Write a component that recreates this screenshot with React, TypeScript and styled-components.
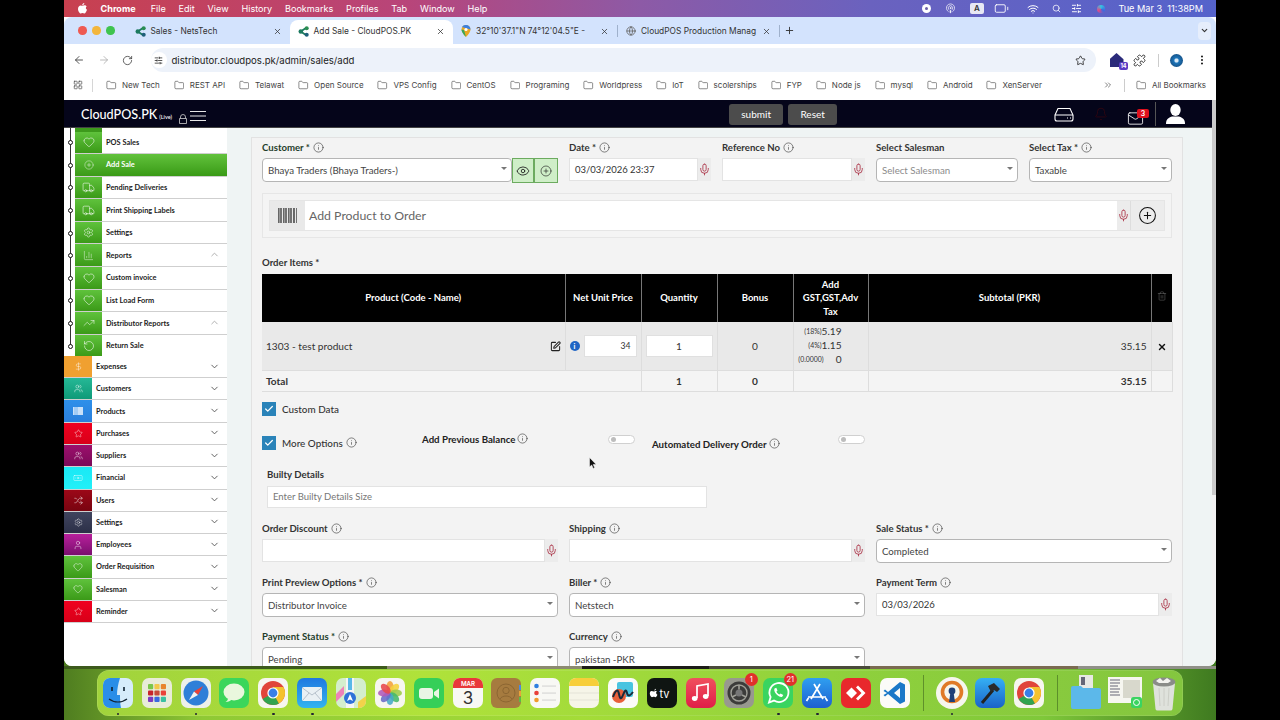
import React from 'react'
import styled, { createGlobalStyle } from 'styled-components'
import {
  Banknote, BarChart3, Battery, ChevronDown, ChevronUp, CirclePlus, DollarSign, Eye, Heart, Info, Mail, Mic,
  Podcast, Puzzle, RotateCcw, RotateCw, ArrowLeft, ArrowRight, Search, Settings, Shuffle, SlidersHorizontal, SquarePen,
  Star, Trash2, TrendingUp, Truck, User, Users, Wifi, X, Plus, Folder, LayoutGrid, Bell, Check, Globe, EllipsisVertical, ChevronsRight,
} from 'lucide-react'

const GlobalStyle = createGlobalStyle`
  html, body { margin: 0; padding: 0; background: #000; height: 100%; overflow: hidden; }
  * { box-sizing: border-box; }
  body { font-family: Lato, "Open Sans", sans-serif; }
`

const Screen = styled.div`
  width: 1152px;
  height: 720px;
  margin: 0 auto;
  display: flex;
  flex-direction: column;
  overflow: hidden;
  background: linear-gradient(90deg, #4f7d20 0%, #8fc935 12%, #a4dc38 45%, #7fc83a 85%, #3f7a20 100%);
`

/* mac menu bar */
const MenuBar = styled.div`
  height: 17px;
  flex: none;
  display: flex;
  align-items: center;
  padding: 0 13px 0 14px;
  color: #fff;
  font-family: Inter, sans-serif;
  font-size: 9.1px;
  background: linear-gradient(90deg, #c8404f 0%, #b8457a 30%, #8d5aa6 50%, #6a62bf 70%, #5563cb 100%);
`
const AppleMark = styled.svg`
  margin-right: 13.5px;
  flex: none;
`
const MenuItem = styled.span<{ $bold?: boolean }>`
  margin-right: ${(p) => (p.$bold ? 15 : 12.8)}px;
  font-weight: ${(p) => (p.$bold ? 700 : 400)};
`
const StatusArea = styled.div`
  margin-left: auto;
  display: flex;
  align-items: center;
  font-size: 9.2px;
`
const StatusSlot = styled.span<{ $ml?: number }>`
  display: flex;
  align-items: center;
  margin-left: ${(p) => p.$ml ?? 0}px;
`
const KeyBox = styled.span`
  width: 14px;
  height: 11px;
  background: #e8e8f4;
  color: #333;
  border-radius: 2px;
  font-size: 8px;
  font-weight: 600;
  text-align: center;
  line-height: 11px;
`
const RecDot = styled.span`
  width: 9px;
  height: 9px;
  border-radius: 50%;
  background: #fff;
  display: flex;
  align-items: center;
  justify-content: center;
  &::after {
    content: '';
    width: 3px;
    height: 3px;
    border-radius: 50%;
    background: #6a5ea8;
  }
`
const SiriDot = styled.span`
  width: 8px;
  height: 8px;
  border-radius: 50%;
  background: conic-gradient(#37c4e0, #3a6ae0, #e04a8a, #37c4e0);
`

/* browser */
const BrowserWindow = styled.div`
  height: 649px;
  flex: none;
  display: flex;
  flex-direction: column;
  background: #fff;
  border-radius: 0 0 8px 8px;
  overflow: hidden;
`
const TabStrip = styled.div`
  height: 27px;
  flex: none;
  background: #d3e3fd;
  border-radius: 8px 8px 0 0;
  display: flex;
  align-items: flex-end;
  padding-left: 14px;
  font-family: Inter, sans-serif;
  font-size: 8.4px;
  color: #333;
`
const TrafficLights = styled.div`
  display: flex;
  gap: 5.5px;
  align-self: center;
  margin-right: 12px;
`
const Light = styled.span<{ $c: string }>`
  width: 8.5px;
  height: 8.5px;
  border-radius: 50%;
  background: ${(p) => p.$c};
`
const Tab = styled.div<{ $w: number; $active?: boolean }>`
  width: ${(p) => p.$w}px;
  height: 24px;
  flex: none;
  display: flex;
  align-items: center;
  gap: 5px;
  padding: 0 8px 2px 8px;
  border-radius: 8px 8px 0 0;
  background: ${(p) => (p.$active ? '#fff' : 'transparent')};
`
const TabTitle = styled.span`
  flex: 1;
  white-space: nowrap;
`
const TabSep = styled.span`
  width: 1px;
  height: 12px;
  background: #9fb1cc;
  align-self: center;
  flex: none;
`
const NewTab = styled.span`
  align-self: center;
  margin-left: 4px;
  display: flex;
`
const ChevronBox = styled.span`
  align-self: center;
  margin-left: auto;
  margin-right: 5px;
  width: 13px;
  height: 18px;
  background: #e6eefc;
  border-radius: 4px;
  display: flex;
  align-items: center;
  justify-content: center;
`
const Toolbar = styled.div`
  height: 32px;
  flex: none;
  background: #fff;
  display: flex;
  align-items: center;
  padding: 0 0 0 9px;
  gap: 12.5px;
  color: #444;
`
const AddressPill = styled.div`
  width: 945px;
  height: 24px;
  flex: none;
  margin-left: 5px;
  background: #edf2fa;
  border-radius: 12px;
  display: flex;
  align-items: center;
  padding: 0 9.5px 0 0;
  font-family: Inter, sans-serif;
  font-size: 9.6px;
  color: #222;
  gap: 5px;
`
const SiteChip = styled.span`
  width: 16px;
  height: 16px;
  border-radius: 50%;
  background: #fff;
  display: flex;
  align-items: center;
  justify-content: center;
`
const PillStar = styled.span`
  margin-left: auto;
  display: flex;
`
const ToolGroup = styled.div`
  display: flex;
  align-items: center;
  margin-left: 1.5px;
`
const ToolSlot = styled.span<{ $ml?: number }>`
  display: flex;
  margin-left: ${(p) => p.$ml ?? 0}px;
`
const ExtBadge = styled.span`
  width: 14px;
  height: 14px;
  display: block;
  background: #2a2a7a;
  clip-path: polygon(50% 0, 100% 45%, 100% 100%, 0 100%, 0 45%);
`
const ExtWrap = styled.span`
  position: relative;
  display: block;
`
const ExtCount = styled.span`
  position: absolute;
  right: -4px;
  bottom: -3px;
  background: #5b3cc4;
  color: #fff;
  font-size: 5.5px;
  font-family: Inter, sans-serif;
  font-weight: 700;
  padding: 1px;
  border-radius: 2px;
`
const ToolSep = styled.span`
  display: block;
  width: 1px;
  height: 13px;
  background: #ccc;
`
const Avatar = styled.span`
  display: block;
  width: 13px;
  height: 13px;
  border-radius: 50%;
  background: radial-gradient(circle, #dbe9f5 15%, #1d74b8 30%, #123e6a 100%);
`
const BookmarkBar = styled.div`
  height: 24px;
  flex: none;
  background: #fff;
  display: flex;
  align-items: center;
  padding: 0 10px 6px 9px;
  font-family: Inter, sans-serif;
  font-size: 8px;
  color: #444;
`
const AppsSep = styled.span`
  width: 1px;
  height: 13px;
  background: #d6d6d6;
  margin: 0 13px 0 9px;
`
const Bookmark = styled.span<{ $last?: boolean }>`
  display: flex;
  align-items: center;
  gap: 5.5px;
  margin-right: ${(p) => (p.$last ? 0 : 13.9)}px;
  white-space: nowrap;
`
const MoreMarks = styled.span`
  margin-left: auto;
  display: flex;
  align-items: center;
  gap: 11px;
`

/* app shell */
const AppArea = styled.div`
  flex: 1;
  min-height: 0;
  display: flex;
`
const AppColumn = styled.div`
  flex: 1;
  min-width: 0;
  display: flex;
  flex-direction: column;
`
const ScrollTrack = styled.div`
  width: 4px;
  flex: none;
  background: #f2f2f2;
`
const ScrollThumb = styled.div`
  height: 395px;
  background: #cbcbcb;
`
const AppHeader = styled.header`
  height: 28px;
  flex: none;
  background: #05051a;
  border-bottom: 1px solid #444;
  display: flex;
  align-items: center;
  padding: 1px 22px 0 17px;
  color: #fff;
`
const Brand = styled.span`
  font-size: 12.6px;
  font-weight: 500;
`
const BrandTag = styled.small`
  font-size: 5.6px;
  margin-left: 2px;
`
const LockMark = styled.svg`
  margin: 9px 0 0 6px;
`
const BurgerMark = styled.svg`
  margin: 3px 0 0 2px;
`
const HeadButton = styled.button<{ $w: number }>`
  width: ${(p) => p.$w}px;
  height: 21px;
  border: 0;
  border-radius: 3px;
  background: #4c4c4c;
  color: #fff;
  font-family: Lato, sans-serif;
  font-size: 10px;
  margin-right: 5px;
  padding: 0;
`
const HeadButtons = styled.div`
  display: flex;
  margin-left: 523px;
`
const HeadIcons = styled.div`
  margin-left: auto;
  display: flex;
  align-items: center;
`
const IconSlot = styled.span<{ $w: number; $top?: number }>`
  width: ${(p) => p.$w}px;
  display: flex;
  justify-content: center;
  position: relative;
  padding-top: ${(p) => p.$top ?? 0}px;
`
const MailBadge = styled.span`
  position: absolute;
  top: 7px;
  right: 3px;
  background: #e0101c;
  border-radius: 2px;
  font-size: 7.5px;
  line-height: 9px;
  font-weight: 700;
  padding: 0 4px;
  color: #fff;
`
const HeadSep = styled.span`
  width: 1px;
  height: 24px;
  background: #555;
  margin: 0 4px 0 3px;
`
const Body = styled.div`
  flex: 1;
  min-height: 0;
  display: flex;
  overflow: hidden;
`

/* sidebar */
const Sidebar = styled.nav`
  width: 163px;
  flex: none;
  background: #fff;
  overflow: hidden;
`
const SubList = styled.div`
  position: relative;
  padding-left: 11px;
  margin-bottom: -1.5px;
  &::before {
    content: '';
    position: absolute;
    left: 6px;
    top: 0;
    bottom: 10px;
    width: 1px;
    background: #333;
  }
`
const SubPeek = styled.div`
  height: 3.5px;
  width: 27px;
  background: #3d9a1c;
`
const SideRow = styled.div<{ $h: number; $active?: boolean }>`
  position: relative;
  height: ${(p) => p.$h}px;
  display: flex;
  align-items: center;
  border-bottom: 1px solid #cfcfcf;
  color: ${(p) => (p.$active ? '#fff' : '#1c1c1c')};
  font-size: 7.4px;
  font-weight: 700;
  background: ${(p) => (p.$active ? 'linear-gradient(#62c23c, #399a16)' : '#fff')};
  svg.chev {
    position: absolute;
    right: 7px;
    top: 50%;
    margin-top: -6px;
  }
`
const TimelineDot = styled.span`
  position: absolute;
  left: -7px;
  top: 50%;
  margin-top: -2px;
  width: 5px;
  height: 5px;
  border-radius: 50%;
  background: #fff;
  border: 1px solid #111;
`
const SideIcon = styled.span<{ $bg: string; $w: number }>`
  width: ${(p) => p.$w}px;
  height: 100%;
  flex: none;
  display: flex;
  align-items: center;
  justify-content: center;
  margin-right: 4px;
  color: rgba(255, 255, 255, 0.85);
  background: ${(p) => p.$bg};
`

/* form */
const Main = styled.main`
  flex: 1;
  min-width: 0;
  background: #eff4f4;
  padding: 9px 29px 0 24px;
  position: relative;
  overflow: hidden;
`
const Card = styled.section`
  background: #f3f3f3;
  border: 1px solid #e2e2e2;
  border-bottom: 0;
  padding: 3px 10px 0 10px;
  height: 600px;
`
const TopGrid = styled.div`
  display: grid;
  grid-template-columns: 296px 142px 143px 142px 143px;
  column-gap: 11px;
`
const ThirdGrid = styled.div`
  display: grid;
  grid-template-columns: repeat(3, 296px);
  column-gap: 11px;
  row-gap: 13px;
  margin-top: 14px;
`
const Label = styled.label<{ $tone?: string }>`
  height: 13px;
  margin-bottom: 4px;
  display: flex;
  align-items: center;
  gap: 3px;
  font-size: 9.6px;
  font-weight: 700;
  color: ${(p) => p.$tone ?? '#333'};
  white-space: nowrap;
`
const InputRow = styled.div`
  display: flex;
  height: 23px;
  margin-top: 0.5px;
`
const TextBox = styled.div`
  flex: 1;
  min-width: 0;
  background: #fff;
  border: 1px solid #e3e3e3;
  padding: 0 5px;
  font-size: 9.5px;
  line-height: 21px;
  color: #333;
`
const MicAddon = styled.span`
  width: 13px;
  flex: none;
  background: #ececec;
  color: #a8293e;
  display: flex;
  align-items: center;
  justify-content: center;
`
const SelectBox = styled.div<{ $muted?: boolean }>`
  position: relative;
  flex: 1;
  height: 24px;
  background: #fff;
  border: 1px solid #b5b5b5;
  border-radius: 4px;
  padding: 0 5px;
  font-size: 9.7px;
  line-height: 23px;
  color: ${(p) => (p.$muted ? '#8b8b8b' : '#444')};
  &::after {
    content: '';
    position: absolute;
    right: 4px;
    top: 8px;
    border: 3px solid transparent;
    border-top: 3px solid #777;
  }
`
const GreenAddon = styled.span<{ $w: number }>`
  width: ${(p) => p.$w}px;
  height: 25px;
  flex: none;
  background: #cfeec8;
  border: 1px solid #6cab5f;
  display: flex;
  align-items: center;
  justify-content: center;
  color: #222;
`
const ControlLine = styled.div`
  display: flex;
`
const ProductBox = styled.div`
  margin-top: 10px;
  height: 45px;
  border: 1px solid #e6e6e6;
  padding: 6px;
  background: #f4f4f4;
`
const ProductRow = styled.div`
  display: flex;
  height: 31px;
  background: #fff;
  border: 1px solid #e5e5e5;
`
const BarcodeAddon = styled.span`
  width: 35px;
  background: #e9e9e9;
  display: flex;
  align-items: center;
  justify-content: center;
`
const ProductText = styled.span`
  flex: 1;
  padding-left: 4px;
  font-size: 12.3px;
  line-height: 29px;
  color: #666;
`
const RoundAddon = styled.span`
  width: 34px;
  background: #ececec;
  border-left: 1px solid #ddd;
  display: flex;
  align-items: center;
  justify-content: center;
  color: #111;
`
const ItemsLabel = styled(Label)`
  margin: 18px 0 5px;
`
const OrderTable = styled.table`
  width: 910px;
  table-layout: fixed;
  border-collapse: collapse;
  font-size: 10.1px;
  color: #333;
`
const HeadCell = styled.th<{ $w: number }>`
  width: ${(p) => p.$w}px;
  height: 48px;
  padding: 0;
  background: #000;
  color: #fff;
  font-size: 9.5px;
  font-weight: 700;
  line-height: 13.6px;
  border-right: 1px solid #777;
  &:last-child { border-right: 0; }
`
const Cell = styled.td<{ $align?: string; $bold?: boolean }>`
  height: 48.5px;
  padding: 0 4px;
  background: #e9e9e9;
  border-right: 1px solid #ddd;
  text-align: ${(p) => p.$align ?? 'center'};
  font-weight: ${(p) => (p.$bold ? 700 : 400)};
`
const FlushCell = styled(Cell)`
  padding: 0;
`
const TotalCell = styled(Cell)`
  height: 21px;
  background: #f4f4f4;
  border-top: 1px solid #ddd;
  border-bottom: 1px solid #ddd;
`
const CellLine = styled.div`
  display: flex;
  align-items: center;
  justify-content: space-between;
`
const PriceBox = styled.span`
  flex: 1;
  height: 22px;
  margin-left: 4px;
  background: #fff;
  border: 1px solid #e0e0e0;
  font-size: 8.6px;
  line-height: 20px;
  text-align: right;
  padding-right: 5px;
`
const QtyBox = styled.div`
  height: 22px;
  background: #fff;
  border: 1px solid #e0e0e0;
  line-height: 20px;
  text-align: center;
`
const InfoDot = styled.span`
  width: 10px;
  height: 10px;
  flex: none;
  border-radius: 50%;
  background: #1f65c4;
  color: #fff;
  font-size: 7px;
  font-weight: 900;
  line-height: 10px;
  text-align: center;
`
const TaxLine = styled.div<{ $gap?: number }>`
  display: flex;
  justify-content: flex-end;
  align-items: center;
  gap: ${(p) => p.$gap ?? 0}px;
  padding-right: 26px;
  line-height: 13.8px;
`
const TaxPrefix = styled.small`
  font-size: 6.9px;
`
const CheckRow = styled.div`
  display: flex;
  align-items: center;
  gap: 6px;
  font-size: 9.9px;
  font-weight: 500;
  color: #333;
`
const CheckText = styled.span`
  display: flex;
  align-items: center;
  gap: 3px;
`
const CheckBox = styled.span`
  width: 14px;
  height: 14px;
  flex: none;
  background: #2a83b9;
  color: #fff;
  display: flex;
  align-items: center;
  justify-content: center;
`
const CustomRow = styled(CheckRow)`
  margin-top: 9.5px;
`
const OptionsRow = styled.div`
  margin-top: 16px;
  height: 19px;
  display: grid;
  grid-template-columns: 160px 186px 44px 186px 30px;
  align-items: start;
`
const OptionCheck = styled(CheckRow)`
  margin-top: 4px;
`
const OptionLabel = styled.span<{ $top: number }>`
  margin-top: ${(p) => p.$top}px;
  display: flex;
  align-items: center;
  gap: 2px;
  font-size: 9.7px;
  font-weight: 700;
  line-height: 12px;
  color: #222;
  white-space: nowrap;
`
const ToggleTrack = styled.span`
  display: block;
  width: 27px;
  height: 9px;
  margin-top: 3px;
  border: 1px solid #d0d0d0;
  border-radius: 5px;
  background: #fff;
  padding: 1px 2px;
  &::before {
    content: '';
    display: block;
    width: 5px;
    height: 5px;
    border-radius: 50%;
    background: #bdbdbd;
  }
`
const BuiltyBlock = styled.div`
  margin: 17px 0 0 5px;
  width: 440px;
`
const BuiltyLabel = styled(Label)`
  margin-bottom: 5px;
`
const BuiltyInput = styled(TextBox)`
  height: 22px;
  flex: none;
  color: #777;
  line-height: 20px;
`
const MouseCursor = styled.svg`
  position: absolute;
  left: 362px;
  top: 329px;
`

/* dock */
const DockBand = styled.div`
  flex: 1;
  padding: 4px 33px;
  background:
    linear-gradient(90deg, #3d5a1c 0 28%, #8c8a70 28% 45%, #1c1c18 45% 56%, #4a4a3a 56% 70%, #7a6a50 70% 88%, #909088 88% 100%) top / 100% 3px no-repeat;
`
const Dock = styled.div`
  height: 46px;
  width: 1086px;
  display: flex;
  align-items: center;
  padding: 0 0 0 1.5px;
  border-radius: 12px;
  background: linear-gradient(90deg, #a1d33c, #b0e23a 30%, #8ed03c 70%, #84c63f);
  box-shadow: inset 0 0 0 0.5px rgba(255, 255, 255, 0.2);
`
const DockSlot = styled.div`
  position: relative;
  width: 38.85px;
  height: 46px;
  flex: none;
  display: flex;
  align-items: center;
  justify-content: center;
`
const RunDot = styled.span`
  position: absolute;
  bottom: 1px;
  left: 50%;
  margin-left: -1px;
  width: 2.5px;
  height: 2.5px;
  border-radius: 50%;
  background: #223;
`
const DockBadge = styled.span`
  position: absolute;
  top: 3px;
  right: 1px;
  min-width: 13px;
  height: 13px;
  border-radius: 7px;
  padding: 0 2px;
  background: #e0302c;
  color: #fff;
  font-family: Inter, sans-serif;
  font-size: 7.5px;
  line-height: 13px;
  text-align: center;
`
const DockSep = styled.span`
  width: 1px;
  height: 36px;
  margin: 0 8.5px;
  background: rgba(40, 70, 20, 0.45);
`
const DeleteX = styled(X)`
  vertical-align: -2px;
`

const InfoIcon = ({ size = 11 }: { size?: number }) => <Info size={size} strokeWidth={1.3} color="#333" />
const MicIcon = ({ size = 15 }: { size?: number }) => <Mic size={size} strokeWidth={1.5} />

const NetsIcon = () => (
  <svg width="11" height="11" viewBox="0 0 12 12">
    <path d="M3 6 9 2M3 6l6 4" stroke="#1d7a5f" strokeWidth="2" />
    <circle cx="3" cy="6" r="2.4" fill="#1d7a5f" />
    <circle cx="9.5" cy="2.4" r="2.2" fill="#2a8d52" />
    <circle cx="9.5" cy="9.6" r="2.2" fill="#1e5f7a" />
  </svg>
)
const PinIcon = () => (
  <svg width="10" height="12" viewBox="0 0 10 12">
    <path d="M5 0a4.5 4.5 0 0 1 4.5 4.5C9.5 7.5 5 12 5 12S.5 7.5.5 4.5A4.5 4.5 0 0 1 5 0Z" fill="#e9a823" />
    <path d="M5 0a4.5 4.5 0 0 1 4.5 4.5L1 2a4.5 4.5 0 0 1 4-2Z" fill="#3a7fe0" />
    <path d="M5 12S.5 7.5.5 4.5L3 5l2 7Z" fill="#38a85a" />
    <circle cx="5" cy="4.5" r="1.6" fill="#fff" />
  </svg>
)
const Barcode = () => (
  <svg width="20" height="15" viewBox="0 0 20 15">
    {[0, 2, 3, 5, 7, 8, 10, 12, 13, 15, 16, 18].map((x, i) => (
      <rect key={x} x={x} width={i % 3 === 0 ? 1.6 : 0.9} height="15" fill="#666" />
    ))}
  </svg>
)
const ProductsGlyph = () => (
  <svg width="10" height="8" viewBox="0 0 10 8">
    <rect width="10" height="8" fill="rgba(255,255,255,.75)" />
    <path d="M2 0v8M4 0v8" stroke="#2e8fe8" strokeWidth=".5" />
  </svg>
)
const DriveIcon = () => (
  <svg width="20" height="15" viewBox="0 0 20 15" fill="none" stroke="#fff" strokeWidth="1.1">
    <path d="M1 8 4 1.500h12L19 8v4a2 2 0 0 1-2 2H3a2 2 0 0 1-2-2Z" />
    <path d="M1 8h18" />
    <path d="M13 11h1M16 11h1" strokeWidth="1.2" />
  </svg>
)

const ChromeLogo = () => (
  <svg width="30" height="30" viewBox="0 0 30 30">
    <rect width="30" height="30" rx="7" fill="#f6f6f0" />
    <circle cx="15" cy="15" r="12" fill="#e0453a" />
    <path d="M15 15 4.6 21A12 12 0 0 0 21 25.4Z" fill="#32a350" />
    <path d="M15 15 21 25.4A12 12 0 0 0 25.4 9H15Z" fill="#f5c22e" />
    <circle cx="15" cy="15" r="5.6" fill="#fff" />
    <circle cx="15" cy="15" r="4.4" fill="#3a7fe6" />
  </svg>
)

const dockApps: { key: string; dot?: boolean; badge?: string; art: React.ReactNode }[] = [
  { key: 'finder', dot: true, art: (
    <svg width="30" height="30" viewBox="0 0 30 30">
      <rect width="30" height="30" rx="7" fill="#d6ecfb" />
      <path d="M7 0h10c-2 6-3 12-3 17h3c0 4 0 9 1 13H7a7 7 0 0 1-7-7V7a7 7 0 0 1 7-7Z" fill="#2a8ee8" />
      <path d="M9 9v4M21 9v4" stroke="#123" strokeWidth="1.6" />
      <path d="M6 21c5 4 13 4 18 0" stroke="#123" strokeWidth="1.2" fill="none" />
    </svg>
  ) },
  { key: 'launch', art: (
    <svg width="30" height="30" viewBox="0 0 30 30">
      <rect width="30" height="30" rx="7" fill="#e8ecd8" />
      {['#7ac64a', '#f2c94a', '#e8842c', '#c8242c', '#c84a3a', '#e8423a', '#7c3ac0', '#3a6ae0', '#3ac0a0'].map((c, i) => (
        <rect key={c} x={6 + (i % 3) * 6.4} y={6 + Math.floor(i / 3) * 6.4} width="5.2" height="5.2" rx="1" fill={c} />
      ))}
    </svg>
  ) },
  { key: 'safari', dot: true, art: (
    <svg width="30" height="30" viewBox="0 0 30 30">
      <rect width="30" height="30" rx="7" fill="#edf0ea" />
      <circle cx="15" cy="15" r="12.5" fill="#2f7fd8" />
      <path d="m22 8-9 5.5 4 3.5Z" fill="#e8423a" />
      <path d="m8 22 9-5-4-3.5Z" fill="#f2f2f2" />
    </svg>
  ) },
  { key: 'messages', art: (
    <svg width="30" height="30" viewBox="0 0 30 30">
      <rect width="30" height="30" rx="7" fill="#3bd65b" />
      <ellipse cx="15" cy="14" rx="10.5" ry="8.5" fill="#e9f7dd" />
      <path d="M9 20c0 2-1 3-2.5 4 3 0 5-1 6-2.5Z" fill="#e9f7dd" />
    </svg>
  ) },
  { key: 'chrome', dot: true, art: <ChromeLogo /> },
  { key: 'mail', dot: true, art: (
    <svg width="30" height="30" viewBox="0 0 30 30">
      <defs>
        <linearGradient id="mailbg" x1="0" y1="0" x2="0" y2="1"><stop offset="0" stopColor="#1f78e0" /><stop offset="1" stopColor="#33b4f0" /></linearGradient>
      </defs>
      <rect width="30" height="30" rx="7" fill="url(#mailbg)" />
      <rect x="5" y="9" width="20" height="14" rx="1.5" fill="#eaf0f4" />
      <path d="m5.5 10 9.5 7 9.5-7M5.5 22.5 12 15M24.5 22.5 18 15" stroke="#a8b4c0" strokeWidth=".8" fill="none" />
    </svg>
  ) },
  { key: 'maps', art: (
    <svg width="30" height="30" viewBox="0 0 30 30">
      <rect width="30" height="30" rx="7" fill="#d4eecd" />
      <path d="M0 24 8 16v-8L0 16Z" fill="#ee82b8" />
      <path d="M22 30v-6l8-6v5a7 7 0 0 1-7 7Z" fill="#f2d24a" />
      <path d="M10 0h8v30h-8Z" fill="#f5f5f5" />
      <path d="M12 0h4v12h-4Z" fill="#58b8e8" />
      <circle cx="14" cy="20" r="6" fill="#2f72d8" />
      <path d="m14 16 3 7-3-1.4-3 1.4Z" fill="#fff" />
    </svg>
  ) },
  { key: 'photos', art: (
    <svg width="30" height="30" viewBox="0 0 30 30">
      <rect width="30" height="30" rx="7" fill="#f6f6f0" />
      {['#f2a23a', '#f5d23a', '#9ccc4a', '#45b86a', '#45a8c8', '#6a6ac8', '#b05ab8', '#e8484a'].map((c, i) => (
        <ellipse key={c} cx="15" cy="9" rx="3.6" ry="6" fill={c} opacity=".88" transform={`rotate(${i * 45} 15 15)`} />
      ))}
    </svg>
  ) },
  { key: 'facetime', art: (
    <svg width="30" height="30" viewBox="0 0 30 30">
      <rect width="30" height="30" rx="7" fill="#35cf58" />
      <rect x="5" y="10" width="14" height="11" rx="3" fill="#e9f5e5" />
      <path d="m20 14 5-3.5v10L20 17Z" fill="#e9f5e5" />
    </svg>
  ) },
  { key: 'calendar', art: (
    <svg width="30" height="30" viewBox="0 0 30 30">
      <rect width="30" height="30" rx="7" fill="#f8f8f4" />
      <path d="M7 0h16a7 7 0 0 1 7 7v3H0V7a7 7 0 0 1 7-7Z" fill="#e8383a" />
      <text x="15" y="7.6" textAnchor="middle" fontFamily="Inter, sans-serif" fontSize="6.2" fontWeight="600" fill="#fff">MAR</text>
      <text x="15" y="25.5" textAnchor="middle" fontFamily="Inter, sans-serif" fontSize="17" fill="#333">3</text>
    </svg>
  ) },
  { key: 'contacts', art: (
    <svg width="30" height="30" viewBox="0 0 30 30">
      <rect width="30" height="30" rx="6" fill="#a67b3f" />
      <circle cx="15" cy="15" r="9" fill="none" stroke="#8c6632" strokeWidth="1" />
      <circle cx="15" cy="12.5" r="3.2" fill="none" stroke="#8c6632" strokeWidth="1" />
      <path d="M9 21c2-4 10-4 12 0" fill="none" stroke="#8c6632" strokeWidth="1" />
      <rect x="28" y="7" width="2" height="5" fill="#4a8ae0" /><rect x="28" y="13" width="2" height="5" fill="#e8a23a" /><rect x="28" y="19" width="2" height="5" fill="#5ab84a" />
    </svg>
  ) },
  { key: 'reminders', art: (
    <svg width="30" height="30" viewBox="0 0 30 30">
      <rect width="30" height="30" rx="7" fill="#f8f8f4" />
      {([['#2f7fe0', 8], ['#e8403a', 15], ['#f09a2c', 22]] as [string, number][]).map(([c, y]) => (
        <g key={c}>
          <circle cx="6.5" cy={y} r="2.3" fill={c} />
          <rect x="12" y={y - 0.4} width="14" height=".9" fill="#ccc" />
        </g>
      ))}
    </svg>
  ) },
  { key: 'notes', art: (
    <svg width="30" height="30" viewBox="0 0 30 30">
      <rect width="30" height="30" rx="7" fill="#f6f5e8" />
      <path d="M7 0h16a7 7 0 0 1 7 7v1H0V7a7 7 0 0 1 7-7Z" fill="#f7ce3a" />
      <path d="M0 15h30M0 22h30" stroke="#dcdcd0" strokeWidth=".7" />
    </svg>
  ) },
  { key: 'freeform', art: (
    <svg width="30" height="30" viewBox="0 0 30 30">
      <rect width="30" height="30" rx="7" fill="#fbfbf8" />
      <rect x="9" y="4" width="16" height="15" rx="2" fill="#4ac4e0" />
      <circle cx="11" cy="18" r="7" fill="#e8603a" />
      <path d="M5 19c3-8 5-8 6-3s2 6 4 1 3-6 4-2 3 3 6-1" stroke="#1a2a3a" strokeWidth="2" fill="none" />
    </svg>
  ) },
  { key: 'tv', art: (
    <svg width="30" height="30" viewBox="0 0 30 30">
      <rect width="30" height="30" rx="7" fill="#0f1512" />
      <path d="M9 13c-1 0-1.500.6-2.300.6C6 13.600 5.400 13 4.600 13 3.400 13 2.800 14.300 2.800 15.600c0 1.800 1.200 3.600 2.200 3.600.6 0 .9-.4 1.700-.4s1 .4 1.700.4c.9 0 1.700-1.400 2-2.400-1.600-.7-1.600-2.900-.4-3.800Z" fill="#fff" />
      <path d="M7.400 12.600c0-.9.7-1.700 1.500-1.800 0 1-.7 1.800-1.500 1.800Z" fill="#fff" />
      <text x="12.5" y="19.5" fontFamily="Inter, sans-serif" fontSize="11" fill="#fff">tv</text>
    </svg>
  ) },
  { key: 'music', art: (
    <svg width="30" height="30" viewBox="0 0 30 30">
      <defs>
        <linearGradient id="musicbg" x1="0" y1="0" x2="0" y2="1"><stop offset="0" stopColor="#f0505e" /><stop offset="1" stopColor="#e01e48" /></linearGradient>
      </defs>
      <rect width="30" height="30" rx="7" fill="url(#musicbg)" />
      <path d="M11 20V8l11-2v12" stroke="#fff" strokeWidth="1.7" fill="none" />
      <ellipse cx="8.7" cy="20.5" rx="2.8" ry="2.4" fill="#fff" />
      <ellipse cx="19.7" cy="18.5" rx="2.8" ry="2.4" fill="#fff" />
    </svg>
  ) },
  { key: 'system', badge: '1', art: (
    <svg width="30" height="30" viewBox="0 0 30 30">
      <rect width="30" height="30" rx="7" fill="#98998f" />
      <circle cx="15" cy="15" r="11.5" fill="#3c3c3a" />
      <circle cx="15" cy="15" r="8" fill="none" stroke="#a0a098" strokeWidth="1.4" />
      <circle cx="15" cy="15" r="3.5" fill="#777" />
      <path d="M15 7v4.5M8 19l4-2M22 19l-4-2" stroke="#a0a098" strokeWidth="1.6" />
    </svg>
  ) },
  { key: 'whatsapp', dot: true, badge: '21', art: (
    <svg width="30" height="30" viewBox="0 0 30 30">
      <rect width="30" height="30" rx="7" fill="#3ad460" />
      <path d="M6 24.5 7.6 19A9.5 9.5 0 1 1 11 22.6Z" fill="none" stroke="#fff" strokeWidth="1.8" />
      <path d="M11.5 10.5c-1.5 3 3.5 9 7.5 8.5l1.3-2-2.8-1.5-1 1c-1.500-.5-2.600-1.800-3-3l1-1-1.200-2.800Z" fill="#fff" />
    </svg>
  ) },
  { key: 'appstore', dot: true, art: (
    <svg width="30" height="30" viewBox="0 0 30 30">
      <defs>
        <linearGradient id="asbg" x1="0" y1="0" x2="0" y2="1"><stop offset="0" stopColor="#2f9ff0" /><stop offset="1" stopColor="#1d5fd0" /></linearGradient>
      </defs>
      <rect width="30" height="30" rx="7" fill="url(#asbg)" />
      <path d="M12 6l9 15M18 6 9 21M6 19h18M4.5 23l2-3M25.5 23l-2-3" stroke="#fff" strokeWidth="1.7" fill="none" />
    </svg>
  ) },
  { key: 'anydesk', art: (
    <svg width="30" height="30" viewBox="0 0 30 30">
      <rect width="30" height="30" rx="7" fill="#e8282c" />
      <path d="m10.5 9.5 5.5 5.5-5.500 5.500L5 15Z" fill="#fff" />
      <path d="m17 7.5 7.5 7.5-7.500 7.500-2-2 5.500-5.500L15 9.500Z" fill="#fff" />
    </svg>
  ) },
  { key: 'vscode', art: (
    <svg width="30" height="30" viewBox="0 0 30 30">
      <rect width="30" height="30" rx="7" fill="#fbfbf8" />
      <path d="M20 4 25 6.5v17L20 26 8 16l-3 2.5L3.5 17 7 15 3.5 13 5 11.5 8 14Zm0 6-6 5 6 5Z" fill="#1a78c8" />
    </svg>
  ) },
  { key: 'sep1', art: null },
  { key: 'vpn', dot: true, art: (
    <svg width="32" height="32" viewBox="0 0 32 32">
      <circle cx="16" cy="16" r="16" fill="#f6f6ee" />
      <circle cx="16" cy="15" r="9.5" fill="none" stroke="#e07a28" strokeWidth="3.6" />
      <circle cx="16" cy="14" r="3.4" fill="#1f3f78" />
      <path d="M14.5 15h3l1.500 10h-6Z" fill="#1f3f78" />
    </svg>
  ) },
  { key: 'xcode', art: (
    <svg width="30" height="30" viewBox="0 0 30 30">
      <defs>
        <linearGradient id="xcbg" x1="0" y1="0" x2="0" y2="1"><stop offset="0" stopColor="#35b0f4" /><stop offset="1" stopColor="#1a62c8" /></linearGradient>
      </defs>
      <rect width="30" height="30" rx="7" fill="url(#xcbg)" />
      <path d="M7 25 18 12" stroke="#222" strokeWidth="3" />
      <path d="m13 8 6-3 6 6-3 3-3-2-3 2Z" fill="#2a2a2a" />
    </svg>
  ) },
  { key: 'chrome2', art: <ChromeLogo /> },
  { key: 'sep2', art: null },
  { key: 'folder', art: (
    <svg width="32" height="36" viewBox="0 0 32 36">
      <rect x="9" y="0" width="14" height="14" fill="#e8e8e4" />
      <rect x="11" y="2" width="4" height="8" fill="#667" />
      <path d="M1 13a2 2 0 0 1 2-2h8l2 2h16a2 2 0 0 1 2 2v17a2 2 0 0 1-2 2H3a2 2 0 0 1-2-2Z" fill="#5cb8ea" />
    </svg>
  ) },
  { key: 'doc', art: (
    <svg width="34" height="32" viewBox="0 0 34 32">
      <rect x="0" y="0" width="34" height="26" fill="#f6f6f0" />
      <path d="M2 3h10M2 6h10M2 9h8M2 12h10M2 15h9M2 18h10" stroke="#667" strokeWidth="1" />
      <rect x="15" y="3" width="17" height="18" fill="#d8d8cc" />
      <rect x="23" y="20" width="11" height="11" rx="2.5" fill="#3ad460" />
      <circle cx="28.5" cy="25.5" r="3" fill="none" stroke="#fff" strokeWidth="1" />
    </svg>
  ) },
  { key: 'trash', art: (
    <svg width="26" height="36" viewBox="0 0 26 36">
      <path d="M2 8h22l-2.500 26a2 2 0 0 1-2 1.600h-13a2 2 0 0 1-2-1.600Z" fill="#dfe2dc" />
      <ellipse cx="13" cy="7" rx="11.5" ry="4.5" fill="#8a8c88" />
      <path d="M5 6l4-3 3 3 4-3 4 3-3 2H8Z" fill="#f2f2ee" />
      <path d="M8 13l1 18M13 13v18M18 13l-1 18" stroke="#c6c9c2" strokeWidth=".8" />
    </svg>
  ) },
]

const green = 'linear-gradient(#5fc23c, #3b9a18)'
const subItems = [
  { label: 'POS Sales', icon: <Heart size={12} strokeWidth={1.3} /> },
  { label: 'Add Sale', icon: <CirclePlus size={10} strokeWidth={1.2} />, active: true },
  { label: 'Pending Deliveries', icon: <Truck size={13} strokeWidth={1.2} /> },
  { label: 'Print Shipping Labels', icon: <Truck size={13} strokeWidth={1.2} /> },
  { label: 'Settings', icon: <Settings size={11} strokeWidth={1.3} /> },
  { label: 'Reports', icon: <BarChart3 size={11} strokeWidth={1.1} />, up: true },
  { label: 'Custom invoice', icon: <Heart size={12} strokeWidth={1.3} /> },
  { label: 'List Load Form', icon: <Heart size={12} strokeWidth={1.3} /> },
  { label: 'Distributor Reports', icon: <TrendingUp size={12} strokeWidth={1.2} />, up: true },
  { label: 'Return Sale', icon: <RotateCcw size={12} strokeWidth={1.3} /> },
]
const mainItems = [
  { label: 'Expenses', bg: '#f0a030', icon: <DollarSign size={9} strokeWidth={1.3} /> },
  { label: 'Customers', bg: 'linear-gradient(#25b896, #0f9a78)', icon: <Users size={9} strokeWidth={1.4} /> },
  { label: 'Products', bg: 'linear-gradient(#2e90ea, #2a7fdc)', icon: <ProductsGlyph /> },
  { label: 'Purchases', bg: 'linear-gradient(#f00020, #d80018)', icon: <Star size={9} strokeWidth={1.3} /> },
  { label: 'Suppliers', bg: 'linear-gradient(#9c0f6c, #7a0a58)', icon: <Users size={9} strokeWidth={1.4} /> },
  { label: 'Financial', bg: 'linear-gradient(#1ae8f5, #22f0f8)', icon: <Banknote size={10} strokeWidth={1.2} /> },
  { label: 'Users', bg: 'linear-gradient(#9c0818, #780410)', icon: <Shuffle size={9} strokeWidth={1.5} /> },
  { label: 'Settings', bg: 'linear-gradient(#40445e, #2c3048)', icon: <Settings size={9} strokeWidth={1.3} /> },
  { label: 'Employees', bg: 'linear-gradient(#b8209c, #7a0f6e)', icon: <User size={10} strokeWidth={1.3} /> },
  { label: 'Order Requisition', bg: green, icon: <Heart size={10} strokeWidth={1.3} /> },
  { label: 'Salesman', bg: green, icon: <Heart size={10} strokeWidth={1.3} /> },
  { label: 'Reminder', bg: 'linear-gradient(#f00020, #d80018)', icon: <Star size={9} strokeWidth={1.3} /> },
]
const menus = ['File', 'Edit', 'View', 'History', 'Bookmarks', 'Profiles', 'Tab', 'Window', 'Help']
const marks = ['New Tech', 'REST API', 'Telawat', 'Open Source', 'VPS Config', 'CentOS', 'Programing', 'Worldpress', 'IoT', 'scolerships', 'FYP', 'Node js', 'mysql', 'Android', 'XenServer']

const Field = ({ label, tone, info = true, children }: { label: string; tone?: string; info?: boolean; children: React.ReactNode }) => (
  <div>
    <Label $tone={tone}>
      {label}
      {info && <InfoIcon />}
    </Label>
    {children}
  </div>
)
const MicInput = ({ value }: { value?: string }) => (
  <InputRow>
    <TextBox>{value}</TextBox>
    <MicAddon><MicIcon /></MicAddon>
  </InputRow>
)

export default function App() {
  return (
    <Screen>
      <GlobalStyle />
      <MenuBar>
        <AppleMark width="9" height="11" viewBox="0 0 10 12">
          <path d="M7 0c0 1.400-1 2.500-2.300 2.500C4.700 1.200 5.700.1 7 0Zm-2 3c.6 0 1.400-.5 2.300-.5.900 0 1.800.5 2.300 1.200C8.300 4.500 8.500 6.700 10 7.300 9.400 9 8.200 11.500 7 11.500c-.7 0-1.100-.5-2-.5s-1.300.5-2 .5C1.700 11.500 0 8.700 0 6.500 0 4 1.600 2.600 3 2.600c.8 0 1.500.4 2 .4Z" fill="#fff" />
        </AppleMark>
        <MenuItem $bold>Chrome</MenuItem>
        {menus.map((m) => <MenuItem key={m}>{m}</MenuItem>)}
        <StatusArea>
          <RecDot />
          <StatusSlot $ml={14}><Podcast size={11} strokeWidth={1.5} /></StatusSlot>
          <StatusSlot $ml={13.5}><KeyBox>A</KeyBox></StatusSlot>
          <StatusSlot $ml={10.5}><Battery size={15} strokeWidth={1.4} /></StatusSlot>
          <StatusSlot $ml={18}><Wifi size={12} strokeWidth={2} /></StatusSlot>
          <StatusSlot $ml={12.5}><Search size={9} strokeWidth={2} /></StatusSlot>
          <StatusSlot $ml={10}><SlidersHorizontal size={11} strokeWidth={2} /></StatusSlot>
          <StatusSlot $ml={15.5}><SiriDot /></StatusSlot>
          <StatusSlot $ml={13}>Tue Mar 3&nbsp;&nbsp;11:38PM</StatusSlot>
        </StatusArea>
      </MenuBar>
      <BrowserWindow>
        <TabStrip>
          <TrafficLights>
            <Light $c="#ee5a52" /><Light $c="#f3b63c" /><Light $c="#3fc44f" />
          </TrafficLights>
          <Tab $w={163}>
            <NetsIcon /><TabTitle>Sales - NetsTech</TabTitle><X size={9} />
          </Tab>
          <Tab $w={163.5} $active>
            <NetsIcon /><TabTitle>Add Sale - CloudPOS.PK</TabTitle><X size={9} />
          </Tab>
          <Tab $w={164}>
            <PinIcon /><TabTitle>32°10'37.1"N 74°12'04.5"E -</TabTitle><X size={9} />
          </Tab>
          <TabSep />
          <Tab $w={161}>
            <Globe size={10} color="#666" /><TabTitle>CloudPOS Production Manag</TabTitle><X size={9} />
          </Tab>
          <TabSep />
          <NewTab><Plus size={11} /></NewTab>
          <ChevronBox><ChevronDown size={9} strokeWidth={3} /></ChevronBox>
        </TabStrip>
        <Toolbar>
          <ArrowLeft size={12} strokeWidth={1.8} />
          <ArrowRight size={12} strokeWidth={1.6} color="#aaa" />
          <RotateCw size={11} strokeWidth={1.8} />
          <AddressPill>
            <SiteChip><SlidersHorizontal size={9} strokeWidth={2} /></SiteChip>
            distributor.cloudpos.pk/admin/sales/add
            <PillStar><Star size={11} strokeWidth={1.8} color="#222" /></PillStar>
          </AddressPill>
          <ToolGroup>
            <ExtWrap><ExtBadge /><ExtCount>14</ExtCount></ExtWrap>
            <ToolSlot $ml={9}><Puzzle size={13} strokeWidth={1.6} color="#222" /></ToolSlot>
            <ToolSlot $ml={12.5}><ToolSep /></ToolSlot>
            <ToolSlot $ml={11}><Avatar /></ToolSlot>
            <ToolSlot $ml={12.5}><EllipsisVertical size={12} strokeWidth={2.2} color="#222" /></ToolSlot>
          </ToolGroup>
        </Toolbar>
        <BookmarkBar>
          <LayoutGrid size={10} strokeWidth={1.6} />
          <AppsSep />
          {marks.map((m) => (
            <Bookmark key={m}><Folder size={10.5} strokeWidth={1.4} />{m}</Bookmark>
          ))}
          <MoreMarks>
            <ChevronsRight size={10} strokeWidth={1.6} />
            <ToolSep />
            <Bookmark $last><Folder size={10.5} strokeWidth={1.4} />All Bookmarks</Bookmark>
          </MoreMarks>
        </BookmarkBar>
        <AppArea>
          <AppColumn>
            <AppHeader>
              <Brand>CloudPOS.PK<BrandTag>(Live)</BrandTag></Brand>
              <LockMark width="10" height="10" viewBox="0 0 10 10">
                <path d="M2.500 4.500V3a2.500 2.500 0 0 1 5 0v1.500M1.500 4.500h7v5h-7Z" stroke="#cfcfcf" strokeWidth=".8" fill="none" />
              </LockMark>
              <BurgerMark width="16" height="12" viewBox="0 0 16 12">
                <path d="M0 1.500h16M0 6h16M0 10.500h16" stroke="#e6e6e6" strokeWidth="1.100" />
              </BurgerMark>
              <HeadButtons>
                <HeadButton $w={54}>submit</HeadButton>
                <HeadButton $w={49}>Reset</HeadButton>
              </HeadButtons>
              <HeadIcons>
                <IconSlot $w={37} $top={1}><DriveIcon /></IconSlot>
                <IconSlot $w={37}><Bell size={14} strokeWidth={1.2} color="#3c0710" /></IconSlot>
                <IconSlot $w={33} $top={8}>
                  <Mail size={17} strokeWidth={1.2} />
                  <MailBadge>3</MailBadge>
                </IconSlot>
                <HeadSep />
                <IconSlot $w={30}>
                  <svg width="19" height="20" viewBox="0 0 19 20">
                    <ellipse cx="9.5" cy="6" rx="5.2" ry="6" fill="#fff" />
                    <path d="M0 20c0-4 1.500-6 6-7.500h7c4.500 1.500 6 3.500 6 7.500Z" fill="#fff" />
                  </svg>
                </IconSlot>
              </HeadIcons>
            </AppHeader>
            <Body>
              <Sidebar>
                <SubList>
                  <SubPeek />
                  {subItems.map((s) => (
                    <SideRow key={s.label} $h={22.6} $active={s.active}>
                      <TimelineDot />
                      <SideIcon $bg={green} $w={27}>{s.icon}</SideIcon>
                      {s.label}
                      {s.up && <ChevronUp className="chev" size={11} color="#aaa" strokeWidth={2} />}
                    </SideRow>
                  ))}
                </SubList>
                {mainItems.map((m) => (
                  <SideRow key={m.label} $h={22.27}>
                    <SideIcon $bg={m.bg} $w={28}>{m.icon}</SideIcon>
                    {m.label}
                    <ChevronDown className="chev" size={11} color="#555" strokeWidth={2} />
                  </SideRow>
                ))}
              </Sidebar>
              <Main>
                <Card>
                  <TopGrid>
                    <div>
                      <Label $tone="#1f3d2b">Customer * <InfoIcon /></Label>
                      <ControlLine>
                        <SelectBox>Bhaya Traders (Bhaya Traders-)</SelectBox>
                        <GreenAddon $w={22}><Eye size={14} strokeWidth={1.5} /></GreenAddon>
                        <GreenAddon $w={24}><CirclePlus size={12} strokeWidth={1.3} /></GreenAddon>
                      </ControlLine>
                    </div>
                    <Field label="Date *"><MicInput value="03/03/2026 23:37" /></Field>
                    <Field label="Reference No"><MicInput /></Field>
                    <Field label="Select Salesman" info={false}><ControlLine><SelectBox $muted>Select Salesman</SelectBox></ControlLine></Field>
                    <Field label="Select Tax *"><ControlLine><SelectBox>Taxable</SelectBox></ControlLine></Field>
                  </TopGrid>
                  <ProductBox>
                    <ProductRow>
                      <BarcodeAddon><Barcode /></BarcodeAddon>
                      <ProductText>Add Product to Order</ProductText>
                      <MicAddon><MicIcon /></MicAddon>
                      <RoundAddon><CirclePlus size={19} strokeWidth={1.3} /></RoundAddon>
                    </ProductRow>
                  </ProductBox>
                  <ItemsLabel>Order Items *</ItemsLabel>
                  <OrderTable>
                    <thead>
                      <tr>
                        <HeadCell $w={303}>Product (Code - Name)</HeadCell>
                        <HeadCell $w={76}>Net Unit Price</HeadCell>
                        <HeadCell $w={76}>Quantity</HeadCell>
                        <HeadCell $w={76}>Bonus</HeadCell>
                        <HeadCell $w={75}>Add<br />GST,GST,Adv<br />Tax</HeadCell>
                        <HeadCell $w={283}>Subtotal (PKR)</HeadCell>
                        <HeadCell $w={21}><Trash2 size={10} strokeWidth={1.1} color="#777" /></HeadCell>
                      </tr>
                    </thead>
                    <tbody>
                      <tr>
                        <Cell $align="left">
                          <CellLine>1303 - test product<SquarePen size={11} strokeWidth={2.2} color="#222" /></CellLine>
                        </Cell>
                        <Cell>
                          <CellLine><InfoDot>i</InfoDot><PriceBox>34</PriceBox></CellLine>
                        </Cell>
                        <Cell><QtyBox>1</QtyBox></Cell>
                        <Cell>0</Cell>
                        <FlushCell>
                          <TaxLine><TaxPrefix>(18%)</TaxPrefix>5.19</TaxLine>
                          <TaxLine><TaxPrefix>(4%)</TaxPrefix>1.15</TaxLine>
                          <TaxLine $gap={12}><TaxPrefix>(0.0000)</TaxPrefix>0</TaxLine>
                        </FlushCell>
                        <Cell $align="right">35.15</Cell>
                        <FlushCell><DeleteX size={10} strokeWidth={3.4} color="#111" /></FlushCell>
                      </tr>
                      <tr>
                        <TotalCell colSpan={2} $align="left" $bold>Total</TotalCell>
                        <TotalCell $bold>1</TotalCell>
                        <TotalCell $bold>0</TotalCell>
                        <TotalCell />
                        <TotalCell $align="right" $bold>35.15</TotalCell>
                        <TotalCell />
                      </tr>
                    </tbody>
                  </OrderTable>
                  <CustomRow>
                    <CheckBox><Check size={10} strokeWidth={3} /></CheckBox>
                    Custom Data
                  </CustomRow>
                  <OptionsRow>
                    <OptionCheck>
                      <CheckBox><Check size={10} strokeWidth={3} /></CheckBox>
                      <CheckText>More Options <InfoIcon /></CheckText>
                    </OptionCheck>
                    <OptionLabel $top={1}>Add Previous Balance <InfoIcon /></OptionLabel>
                    <ToggleTrack />
                    <OptionLabel $top={6}>Automated Delivery Order <InfoIcon /></OptionLabel>
                    <ToggleTrack />
                  </OptionsRow>
                  <BuiltyBlock>
                    <BuiltyLabel>Builty Details</BuiltyLabel>
                    <BuiltyInput>Enter Builty Details Size</BuiltyInput>
                  </BuiltyBlock>
                  <ThirdGrid>
                    <Field label="Order Discount"><MicInput /></Field>
                    <Field label="Shipping"><MicInput /></Field>
                    <Field label="Sale Status *"><ControlLine><SelectBox>Completed</SelectBox></ControlLine></Field>
                    <Field label="Print Preview Options *"><ControlLine><SelectBox>Distributor Invoice</SelectBox></ControlLine></Field>
                    <Field label="Biller *"><ControlLine><SelectBox>Netstech</SelectBox></ControlLine></Field>
                    <Field label="Payment Term"><MicInput value="03/03/2026" /></Field>
                    <Field label="Payment Status *" tone="#1f3d2b"><ControlLine><SelectBox>Pending</SelectBox></ControlLine></Field>
                    <Field label="Currency"><ControlLine><SelectBox>pakistan -PKR</SelectBox></ControlLine></Field>
                  </ThirdGrid>
                </Card>
                <MouseCursor width="8" height="12" viewBox="0 0 8 12">
                  <path d="M0.500 0.500v9.500l2.200-2 1.500 3.400 1.500-.6-1.500-3.300h3Z" fill="#111" stroke="#fff" strokeWidth=".5" />
                </MouseCursor>
              </Main>
            </Body>
          </AppColumn>
          <ScrollTrack><ScrollThumb /></ScrollTrack>
        </AppArea>
      </BrowserWindow>
      <DockBand>
        <Dock>
          {dockApps.map((a) =>
            a.art === null ? (
              <DockSep key={a.key} />
            ) : (
              <DockSlot key={a.key}>
                {a.art}
                {a.badge && <DockBadge>{a.badge}</DockBadge>}
                {a.dot && <RunDot />}
              </DockSlot>
            ),
          )}
        </Dock>
      </DockBand>
    </Screen>
  )
}
